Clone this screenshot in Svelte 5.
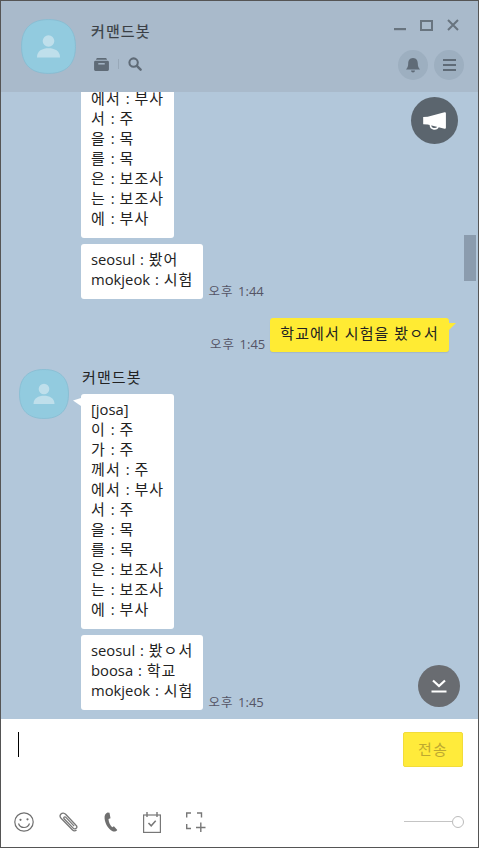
<script>
  const josa = ['이 : 주','가 : 주','께서 : 주','에서 : 부사','서 : 주','을 : 목','를 : 목','은 : 보조사','는 : 보조사','에 : 부사'];
  // Hangul and Latin are sized separately to reproduce the original font's proportions
  const runs = (text) => text.split(/([\u3131-\u318E\uAC00-\uD7A3]+)/).filter(Boolean)
    .map((t) => ({ t, ko: /[\u3131-\u318E\uAC00-\uD7A3]/.test(t) }));
</script>

{#snippet mixed(text)}{#each runs(text) as r}{#if r.ko}<span class="ko">{r.t}</span>{:else}{r.t}{/if}{/each}{/snippet}

{#snippet avatar(cls)}
  <svg class={cls} viewBox="0 0 50 50" aria-hidden="true">
    <path d="M25 .5C40 .5 49.500 8 49.500 25S40 49.500 25 49.500.5 42 .5 25 10 .5 25 .5Z" fill="#92cbdf" stroke="#86bcd2" stroke-width=".8"/>
    <circle cx="25" cy="20" r="5.300" fill="#bfdfeb"/>
    <path d="M14.500 35c0-6 5-8.300 10.500-8.300S35.500 29 35.500 35Z" fill="#bfdfeb"/>
  </svg>
{/snippet}

<div class="window">
  <div class="chat">
    <div class="messages">
      <div class="group">
        <div class="bubble lines">
          {#each josa.slice(3) as line}<div>{@render mixed(line)}</div>{/each}
        </div>
        <div class="row">
          <div class="bubble lines">
            <div>{@render mixed('seosul : 봤어')}</div>
            <div>{@render mixed('mokjeok : 시험')}</div>
          </div>
          <span class="time">{@render mixed('오후 1:44')}</span>
        </div>
      </div>

      <div class="mine">
        <span class="time">{@render mixed('오후 1:45')}</span>
        <div class="bubble yellow">{@render mixed('학교에서 시험을 봤ㅇ서')}</div>
      </div>

      <div class="incoming">
        {@render avatar('avatar')}
        <div class="group flush">
          <div class="name">{@render mixed('커맨드봇')}</div>
          <div class="bubble lines tail">
            <div>[josa]</div>
            {#each josa as line}<div>{@render mixed(line)}</div>{/each}
          </div>
          <div class="row">
            <div class="bubble lines">
              <div>{@render mixed('seosul : 봤ㅇ서')}</div>
              <div>{@render mixed('boosa : 학교')}</div>
              <div>{@render mixed('mokjeok : 시험')}</div>
            </div>
            <span class="time">{@render mixed('오후 1:45')}</span>
          </div>
        </div>
      </div>
    </div>

    <div class="scrollbar"></div>

    <button class="fab notice" aria-label="공지">
      <svg viewBox="0 0 28 22" width="26" height="20"><path d="M1 6.500 6 6.300 24.500 1.500c1-.2 1.500.2 1.500 1v16c0 .8-.5 1.200-1.500 1L6 14.800 1 14.600Z" fill="#fff"/><path d="M9 15.500c0 5 7 5.500 8.500 1.500" fill="none" stroke="#fff" stroke-width="1.800"/></svg>
    </button>
    <button class="fab down" aria-label="아래로">
      <svg viewBox="0 0 16 15" width="16" height="15"><path d="M2 1.500 8 7l6-5.500" fill="none" stroke="#fff" stroke-width="2.200"/><rect x="0.500" y="11.500" width="15" height="2" fill="#fff"/></svg>
    </button>

    <header class="header">
      {@render avatar('avatar big')}
      <div class="title">
        <div class="title-name">{@render mixed('커맨드봇')}</div>
        <div class="tools">
          <svg viewBox="0 0 16 14" width="15" height="13"><path d="M3 0h10l1 2H2Z" fill="#5f6b77"/><path d="M1.500 3h13A1.500 1.500 0 0 1 16 4.500V12.500A1.500 1.500 0 0 1 14.500 14H1.500A1.500 1.500 0 0 1 0 12.500V4.500A1.500 1.500 0 0 1 1.500 3Z" fill="#5f6b77"/><rect x="4.500" y="5.500" width="7" height="1.500" fill="#a9bacb"/></svg>
          <span class="divider"></span>
          <svg viewBox="0 0 15 15" width="14" height="14"><circle cx="6" cy="6" r="4.500" fill="none" stroke="#5f6b77" stroke-width="2.200"/><path d="m9.500 9.500 4 4" stroke="#5f6b77" stroke-width="2.600" stroke-linecap="round"/></svg>
        </div>
      </div>
      <div class="side">
        <div class="controls">
          <svg viewBox="0 0 12 11" width="12" height="11"><rect x="0" y="8" width="12" height="2.200" fill="#68747f"/></svg>
          <svg viewBox="0 0 13 11" width="13" height="11"><rect x="1" y="1" width="11" height="9" fill="none" stroke="#68747f" stroke-width="2"/></svg>
          <svg viewBox="0 0 12 12" width="12" height="12"><path d="m1 1 10 10M11 1 1 11" stroke="#68747f" stroke-width="2"/></svg>
        </div>
        <div class="rounds">
          <button class="round" aria-label="알림">
            <svg viewBox="0 0 14 15" width="14" height="15"><path d="M7 0c3.500 0 4.800 2.800 4.800 5.500 0 3 .8 4.500 2.200 6H0c1.400-1.500 2.200-3 2.200-6C2.200 2.800 3.500 0 7 0Z" fill="#5f6b77"/><path d="M5 12.500h4a2 2 0 0 1-4 0Z" fill="#5f6b77"/></svg>
          </button>
          <button class="round" aria-label="메뉴">
            <svg viewBox="0 0 13 12" width="13" height="12"><path d="M0 1h13M0 6h13M0 11h13" stroke="#5f6b77" stroke-width="2"/></svg>
          </button>
        </div>
      </div>
    </header>
  </div>

  <div class="composer">
    <div class="input">
      <span class="caret"></span>
      <button class="send">{@render mixed('전송')}</button>
    </div>
    <div class="toolbar">
      <div class="icons">
        <svg viewBox="0 0 20 20" width="20" height="20" fill="none" stroke="#6f6f6f" stroke-width="1.200"><circle cx="10" cy="10" r="9.200"/><circle cx="6.500" cy="7.800" r="1.100" fill="#6f6f6f" stroke="none"/><circle cx="13.500" cy="7.300" r="1.100" fill="#6f6f6f" stroke="none"/><path d="M4.500 11.500c1 3 3.500 4 5.500 4s4.500-1.200 5.500-4"/></svg>
        <svg viewBox="0 0 20 20" width="20" height="20" fill="none" stroke="#777" stroke-width="1.300"><path d="M17.500 18c-1.300 1.200-3 1-4.200-.2L2.300 6.500C.8 5 .8 3.200 2 2s3.200-1.200 4.600.3L17 13.200c1 1 1 2.300.2 3.100s-2.100.7-3-.2L5.300 7c-.6-.6-.6-1.300-.2-1.800s1.200-.4 1.800.2l8.300 8.700"/></svg>
        <svg viewBox="0 0 14 20" width="14" height="20"><path d="M3.500.5C1.200 1.800.3 3.500.6 6.500c.5 5 3.500 10.500 8 12.700 1.500.7 3.500.3 4.700-1.300l-3.400-3.700-1.700 1C6 13.500 4.600 10 4.500 7l2-.8L5.500.8Z" fill="#6f6f6f"/></svg>
        <svg viewBox="0 0 18 21" width="18" height="21" fill="none" stroke="#777" stroke-width="1.200"><rect x=".6" y="3" width="16.800" height="17.400"/><path d="M4 0v5M14 0v5" stroke-width="1.400"/><path d="m5.500 11 2.700 2.800 4.500-5" stroke-width="1.500"/></svg>
        <svg viewBox="0 0 20 20" width="20" height="20" fill="none" stroke="#777" stroke-width="1.400"><path d="M5 1H.7v4.500M11 1h4.500v4.500M.7 12v4.500H5"/><path d="M10 15.500h9.500M14.800 10.500V20"/></svg>
      </div>
      <div class="slider"><span class="track"></span><span class="knob"></span></div>
    </div>
  </div>
</div>

<style>
  :global(body) { margin: 0; background: #fff; }
  :global(button) { border: 0; padding: 0; font: inherit; cursor: pointer; }
  .window {
    box-sizing: border-box; width: 479px; height: 848px; display: flex; flex-direction: column;
    border: 1px solid #555; font-family: "Open Sans", "Noto Sans CJK KR", sans-serif;
    font-size: 14.800px; word-spacing: 1px; color: #222; overflow: hidden;
  }
  .ko { font-family: "Noto Sans CJK KR", sans-serif; font-size: 15px; letter-spacing: 1.100px; line-height: 1; }
  .chat { position: relative; flex: 1; min-height: 0; background: #b2c7da; overflow: hidden; display: flex; flex-direction: column; justify-content: flex-end; }
  .messages { display: flex; flex-direction: column; padding: 0 0 9px 18px; }
  .group { display: flex; flex-direction: column; align-items: flex-start; gap: 6px; padding-left: 62px; }
  .group.flush { padding-left: 0; margin-left: 12px; }
  .row { display: flex; align-items: flex-end; gap: 5px; }
  .bubble { background: #fff; border-radius: 3px; box-sizing: border-box; }
  .lines { padding: 5px 10px 10px; line-height: 20px; white-space: nowrap; }
  .tail { position: relative; margin-top: 2px; }
  .tail::before { content: ""; position: absolute; left: -8px; top: 4px; border-top: 8px solid transparent; border-right: 8px solid #fff; transform: skewY(35deg); transform-origin: right top; }
  .time { font-size: 13px; color: #556; line-height: 15px; white-space: nowrap; }
  .time .ko { font-size: 12.500px; letter-spacing: 1.100px; }
  .mine { display: flex; justify-content: flex-end; align-items: flex-end; gap: 5px; margin: 19px 29px 17px 0; }
  .yellow { position: relative; background: #ffeb33; padding: 5px 10px 9px; line-height: 20px; white-space: nowrap; box-shadow: 0 1px 1px rgba(0,0,0,.08); }
  .yellow::after { content: ""; position: absolute; right: -7px; top: 5px; width: 0; height: 0; border-top: 7px solid #ffeb33; border-right: 7px solid transparent; }
  .incoming { display: flex; align-items: flex-start; }
  .avatar { width: 50px; height: 50px; flex: none; display: block; }
  .big { width: 55px; height: 55px; }
  .name { line-height: 17px; margin-left: 1px; }
  .scrollbar { position: absolute; right: 2px; top: 234px; width: 12px; height: 46px; background: #8b9cae; }
  .fab { position: absolute; border-radius: 50%; display: flex; align-items: center; justify-content: center; }
  .notice { width: 47px; height: 47px; left: 410px; top: 96px; background: #5b656e; }
  .down { width: 42px; height: 42px; left: 417px; top: 664px; background: #696c71; }
  .header { position: absolute; inset: 0 0 auto 0; height: 91px; background: #a9bacb; display: flex; padding: 18px 0 0 20px; box-sizing: border-box; }
  .title { margin-left: 15px; }
  .title-name { line-height: 20px; margin-top: 2px; color: #3a3f45; -webkit-text-stroke: .2px #3a3f45; }
  .tools { display: flex; align-items: center; gap: 9px; margin-top: 16px; margin-left: 3px; }
  .divider { width: 1px; height: 10px; background: #98a8b8; }
  .side { margin-left: auto; display: flex; flex-direction: column; align-items: flex-end; padding-right: 14px; }
  .controls { display: flex; align-items: center; gap: 14px; padding-right: 5px; }
  .rounds { display: flex; gap: 6px; margin-top: 19px; }
  .round { width: 30px; height: 30px; border-radius: 50%; background: #9dafc0; display: flex; align-items: center; justify-content: center; }
  .composer { height: 128px; flex: none; background: #fff; display: flex; flex-direction: column; }
  .input { flex: 1; display: flex; justify-content: space-between; align-items: flex-start; padding: 13px 15px 0 17px; }
  .caret { width: 1px; height: 25px; background: #000; }
  .send { width: 60px; height: 35px; background: #ffeb3b; border-radius: 2px; border: 1px solid #f2dc3a; box-sizing: border-box; color: #bda930; padding-bottom: 2px; }
  .toolbar { display: flex; justify-content: space-between; align-items: center; height: 24px; padding: 0 14px 13px 13px; }
  .icons { display: flex; align-items: center; gap: 25px; }
  .slider { display: flex; align-items: center; width: 60px; margin-top: -1px; }
  .track { width: 48px; height: 1px; background: #c4c4c4; }
  .knob { width: 10px; height: 10px; border: 1px solid #bbb; border-radius: 50%; background: #fff; }
</style>
